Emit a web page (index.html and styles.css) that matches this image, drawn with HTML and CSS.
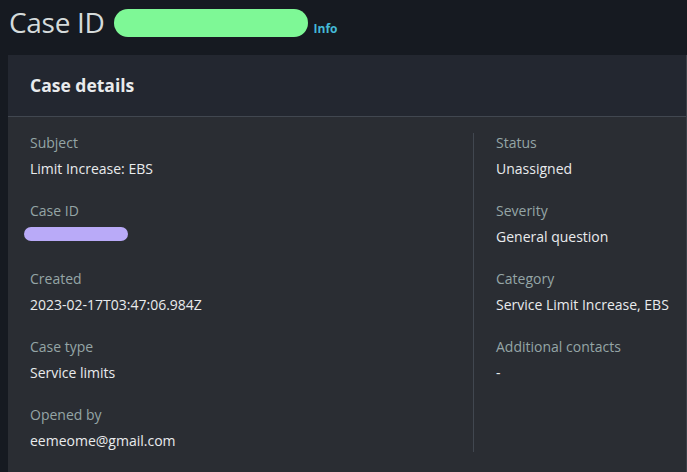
FILE: index.html
```html
<!DOCTYPE html>
<html>
<head>
<meta charset="utf-8">
<link rel="stylesheet" href="styles.css">
</head>
<body>
<div class="page-head">
  <h1 class="title">Case ID</h1>
  <span class="pill-green"></span>
  <a class="info">Info</a>
</div>
<section class="panel">
  <header class="panel-head"><h2>Case details</h2></header>
  <div class="panel-body">
    <div class="col">
      <div class="field"><div class="label">Subject</div><div class="value">Limit Increase: EBS</div></div>
      <div class="field"><div class="label">Case ID</div><div class="value"><span class="pill-purple"></span></div></div>
      <div class="field"><div class="label">Created</div><div class="value">2023-02-17T03:47:06.984Z</div></div>
      <div class="field"><div class="label">Case type</div><div class="value">Service limits</div></div>
      <div class="field"><div class="label">Opened by</div><div class="value">eemeome@gmail.com</div></div>
    </div>
    <div class="col col-right">
      <div class="field"><div class="label">Status</div><div class="value">Unassigned</div></div>
      <div class="field"><div class="label">Severity</div><div class="value">General question</div></div>
      <div class="field"><div class="label">Category</div><div class="value">Service Limit Increase, EBS</div></div>
      <div class="field"><div class="label">Additional contacts</div><div class="value">-</div></div>
    </div>
  </div>
</section>
</body>
</html>
```
FILE: styles.css
```css
html, body {
  margin: 0;
  padding: 0;
  background: #161a21;
  font-family: "Open Sans", "Noto Sans", sans-serif;
  width: 687px;
  height: 472px;
  overflow: hidden;
}
.page-head {
  height: 55px;
  display: flex;
  align-items: center;
  padding-left: 9px;
  box-sizing: border-box;
}
.title {
  margin: 0;
  font-size: 28px;
  font-weight: 400;
  color: #d5dbdb;
  letter-spacing: -0.3px;
  line-height: 1;
  margin-top: -12px;
}
.pill-green {
  display: inline-block;
  width: 194px;
  height: 28px;
  border-radius: 14px;
  background: #7ef896;
  margin-left: 9px;
  margin-top: -10px;
}
.info {
  color: #44b9d6;
  font-size: 12px;
  font-weight: 700;
  margin-left: 6px;
  margin-top: 1px;
}
.panel {
  margin-left: 8px;
  background: #2a2d33;
  height: 417px;
  border-right: 1px solid #3b4048;
}
.panel-head {
  height: 61px;
  background: #232730;
  border-bottom: 1px solid #414750;
  display: flex;
  align-items: center;
  padding-left: 22px;
}
.panel-head h2 {
  margin: 0;
  font-size: 17.5px;
  font-weight: 700;
  color: #e9ebed;
  margin-top: -1px;
}
.panel-body {
  display: grid;
  grid-template-columns: 465px 1fr;
  padding-top: 16px;
}
.col {
  padding-left: 22px;
}
.col-right {
  border-left: 1px solid #414750;
  padding-left: 22px;
  height: 319px;
}
.field {
  height: 68px;
}
.label {
  font-size: 14px;
  color: #95a5a6;
  line-height: 20px;
}
.value {
  font-size: 14px;
  color: #e9ebed;
  line-height: 20px;
  margin-top: 6px;
}
.pill-purple {
  display: block;
  width: 104px;
  height: 14px;
  border-radius: 7px;
  background: #b9aaf8;
  margin-left: -6px;
  margin-top: 6px;
}
```
